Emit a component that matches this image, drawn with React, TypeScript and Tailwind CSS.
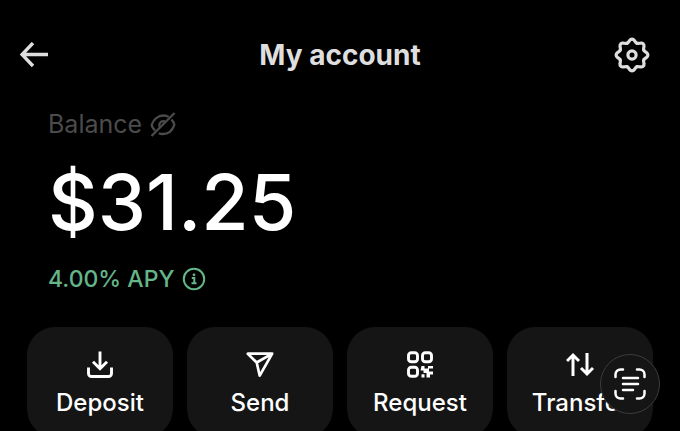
import type { ReactNode } from 'react'

const GEAR_TEETH = [0, 45, 90, 135, 180, 225, 270, 315]

function BackIcon() {
  return (
    <svg width="30" height="26" viewBox="0 0 30 26" fill="none" stroke="currentColor" strokeWidth="3.4" aria-hidden="true">
      <path d="M28 12.500H2.500M13 1 2 12.500l11 11.500" strokeLinejoin="miter" />
    </svg>
  )
}

function GearIcon() {
  return (
    <svg width="36" height="36" viewBox="-18 -18 36 36" fill="none" stroke="currentColor" strokeWidth="3.2" aria-hidden="true">
      {GEAR_TEETH.map((angle) => (
        <path
          key={angle}
          transform={`rotate(${angle})`}
          strokeLinecap="round"
          d="M-4.9-11.8C-3.6-12.3-3.4-13.3-2.4-14.5Q-1.4-15.9 0-15.9Q1.4-15.9 2.4-14.5C3.4-13.3 3.6-12.3 4.9-11.8"
        />
      ))}
      <circle r="4.1" />
    </svg>
  )
}

function HiddenIcon() {
  return (
    <svg width="26" height="26" viewBox="0 0 26 26" fill="none" stroke="currentColor" strokeWidth="2.3" aria-hidden="true">
      <path d="M1.500 24 24.500 1" />
      <path d="M5 18.500C3 16.500 1.700 14.300 1.700 12.800C3.500 7.500 8 3.500 13.500 3.500C15.500 3.500 17.300 4 18.700 4.900" />
      <path d="M21.500 7.500C23 9.200 24 11.300 24.300 12.800C22.500 18.200 18.300 22 12.700 22C11.300 22 10 21.700 8.800 21.200" />
      <path d="M9.800 15.500C8.300 12.500 10 9.300 13 9.100C14 9.100 14.800 9.400 15.500 9.900" />
    </svg>
  )
}

function InfoIcon() {
  return (
    <svg width="24" height="24" viewBox="0 0 24 24" fill="none" stroke="currentColor" strokeWidth="2" aria-hidden="true">
      <circle cx="12" cy="12" r="10.2" />
      <path d="M9.800 11h2.500v5M9.500 16.200h5" />
      <circle cx="12" cy="7.800" r="1.400" fill="currentColor" stroke="none" />
    </svg>
  )
}

function DepositIcon() {
  return (
    <svg width="28" height="28" viewBox="0 0 28 28" fill="none" stroke="currentColor" strokeWidth="2.900" aria-hidden="true">
      <path d="M14 .500v17M7 10.800l7 7 7-7" />
      <path d="M2.500 16.500v6a3 3 0 0 0 3 3h17a3 3 0 0 0 3-3v-6" />
    </svg>
  )
}

function SendIcon() {
  return (
    <svg width="28" height="28" viewBox="0 0 28 28" fill="none" stroke="currentColor" strokeWidth="2.700" strokeLinejoin="round" aria-hidden="true">
      <path d="M1.800 2.700h24.400L13.700 24.700 10.700 11.500zM10.700 11.500l15.500-8.800" />
    </svg>
  )
}

function RequestIcon() {
  return (
    <svg width="28" height="28" viewBox="0 0 28 28" fill="none" stroke="currentColor" strokeWidth="2.900" aria-hidden="true">
      <rect x="2.500" y="1.800" width="9" height="9" rx="2.800" />
      <rect x="16.500" y="1.800" width="9" height="9" rx="2.800" />
      <rect x="2.500" y="16.200" width="9" height="9" rx="2.800" />
      <path
        fill="currentColor"
        stroke="none"
        d="M15.500 15h3v2.500h3.500v-2.500h5v2.500h-4v3h4v3h-3v3h-3.500v-4.500h-3v-2.500h-3zM15.500 23.200h3v3.300h-3z"
      />
    </svg>
  )
}

function TransferIcon() {
  return (
    <svg width="28" height="28" viewBox="0 0 28 28" fill="none" stroke="currentColor" strokeWidth="3" aria-hidden="true">
      <path d="M7 25V4M1 10l6-6 6 6M21 2v21M15 17l6 6 6-6" />
    </svg>
  )
}

function ScanTextIcon() {
  return (
    <svg width="32" height="32" viewBox="0 0 32 32" fill="none" stroke="currentColor" strokeWidth="2.500" strokeLinecap="round" aria-hidden="true">
      <path d="M1.500 9V6.500a5 5 0 0 1 5-5H9M23 1.500h2.500a5 5 0 0 1 5 5V9M30.500 23v2.500a5 5 0 0 1-5 5H23M9 30.500H6.500a5 5 0 0 1-5-5V23" />
      <path d="M9 10h15M9 16h15M9 22h10" />
    </svg>
  )
}

function Action({ label, icon }: { label: string; icon: ReactNode }) {
  return (
    <button type="button" className="flex h-[110px] min-w-0 flex-col items-center gap-2 rounded-[28px] bg-[#151515] pt-6 text-2xl font-medium">
      {icon}
      <span>{label}</span>
    </button>
  )
}

export default function App() {
  return (
    <main className="relative h-screen overflow-hidden bg-black font-['Inter',sans-serif] text-white">
      <header className="flex h-[109px] items-center justify-between pr-7 pl-5 text-[#dedede]">
        <button type="button" aria-label="Back" className="flex w-12">
          <BackIcon />
        </button>
        <h1 className="text-[28px] font-bold">My account</h1>
        <button type="button" aria-label="Settings" className="flex w-10 justify-center">
          <GearIcon />
        </button>
      </header>

      <section className="flex flex-col items-start px-12">
        <div className="flex h-8 items-center gap-2 text-[25px] text-[#4b4b4b]">
          <span>Balance</span>
          <button type="button" aria-label="Hide balance">
            <HiddenIcon />
          </button>
        </div>
        <p className="mt-4 text-[77px] leading-[90px] font-medium">$31.25</p>
        <div className="mt-4 flex h-8 items-center gap-2 text-[23px] font-medium text-[#64b68a]">
          <span>4.00% APY</span>
          <button type="button" aria-label="About APY">
            <InfoIcon />
          </button>
        </div>
      </section>

      <section className="mt-8 grid grid-cols-4 gap-[14px] px-[27px]">
        <Action label="Deposit" icon={<DepositIcon />} />
        <Action label="Send" icon={<SendIcon />} />
        <Action label="Request" icon={<RequestIcon />} />
        <Action label="Transfer" icon={<TransferIcon />} />
      </section>

      <button
        type="button"
        aria-label="Scan text"
        className="absolute right-5 bottom-[17px] flex size-[60px] items-center justify-center rounded-full border border-[#3c3c3c] bg-[#151515]"
      >
        <ScanTextIcon />
      </button>
    </main>
  )
}
